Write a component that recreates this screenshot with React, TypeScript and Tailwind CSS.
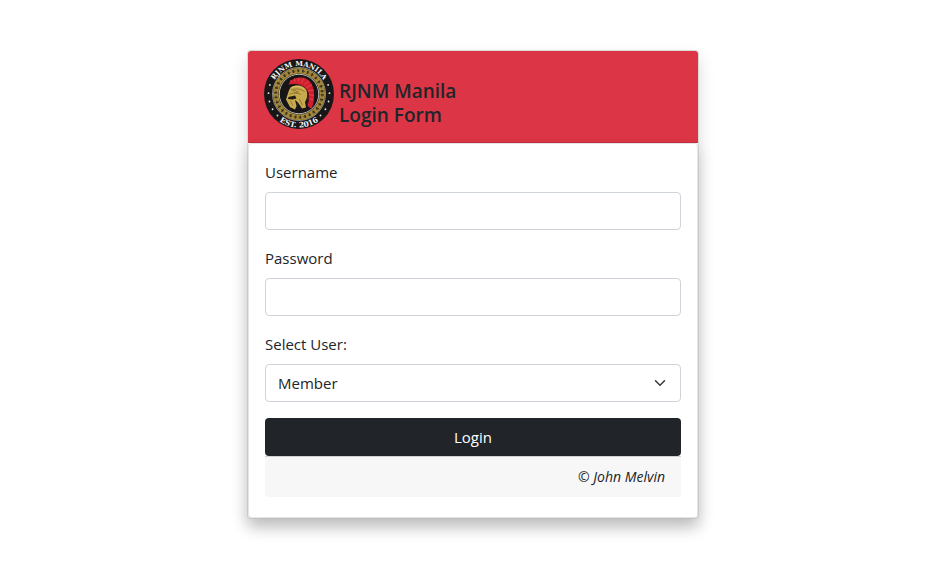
import React from "react";

function Dots({ from, to, count }: { from: number; to: number; count: number }) {
  return (
    <>
      {Array.from({ length: count }, (_, i) => {
        const a = ((from + ((to - from) * i) / (count - 1)) * Math.PI) / 180;
        return <circle key={i} cx={70 + 61 * Math.cos(a)} cy={70 + 61 * Math.sin(a)} r="1.8" fill="#e8e8e8" />;
      })}
    </>
  );
}

function Logo() {
  return (
    <svg className="size-[70px] shrink-0" viewBox="0 0 140 140" role="img" aria-label="RJNM Manila, est. 2016">
      <defs>
        <path id="arc-top" d="M14 70a56 56 0 0 1 112 0" />
        <path id="arc-bottom" d="M3 70a67 67 0 0 0 134 0" />
      </defs>
      <circle cx="70" cy="70" r="70" fill="#191617" />
      <circle cx="70" cy="70" r="53" fill="none" stroke="#b4b1ab" strokeWidth="1.5" />
      <circle cx="70" cy="70" r="46.5" fill="none" stroke="#a58a3c" strokeWidth="11" />
      <circle cx="70" cy="70" r="46.5" fill="none" stroke="#3a301a" strokeWidth="6" strokeDasharray="3.3 6.44" />
      <circle cx="70" cy="70" r="46.5" fill="none" stroke="#453a20" strokeWidth="1.5" strokeDasharray="6 3.74" />
      <circle cx="70" cy="70" r="39.5" fill="#171516" stroke="#bdb9b0" strokeWidth="2" />
      <Dots from={150} to={213} count={5} />
      <Dots from={-33} to={30} count={5} />
      <circle cx="27" cy="113" r="1.8" fill="#e8e8e8" />
      <circle cx="113" cy="113" r="1.8" fill="#e8e8e8" />
      <text fill="#f4f4f4" fontSize="14" fontWeight="700" fontFamily="'DejaVu Serif', serif" textAnchor="middle">
        <textPath href="#arc-top" startOffset="50%">RJNM MANILA</textPath>
      </text>
      <text fill="#f4f4f4" fontSize="15" fontWeight="700" fontFamily="'DejaVu Serif', serif" textAnchor="middle">
        <textPath href="#arc-bottom" startOffset="50%">EST. 2016</textPath>
      </text>
      {/* crest */}
      <path d="M49 51C52 41 64 36 76 37c15 2 23 14 24 31 1 12-1 23-5 31-4-1-7-4-8-8 4-10 4-21-1-29-8-11-22-14-37-11Z" fill="#d21f2f" />
      <path d="m55 46-2-4m9 3-1-6m8 6 1-7m5 10 4-9m2 13 8-8m-4 13 11-6m-8 13 12-2m-12 9 12 2m-13 5 11 4" stroke="#f0555b" strokeWidth="1.3" fill="none" />
      <path d="M86 63c5 9 4 19 1 27" stroke="#651017" strokeWidth="2" fill="none" />
      {/* helmet */}
      <path d="M53 57c11-7 27-4 32 6 3 9 1 17-3 23l2 11-8 2-8-12-6 14-10-5-8-15c3-9 5-18 9-24Z" fill="#c8aa4e" />
      <path d="m49 76 13-3 3 6-8 2-9-1Z" fill="#211b13" />
      <path d="m68 87-3 7-3-12Z" fill="#171516" />
      <path d="M54 62c9-4 20-2 27 3M51 70c8-3 16-2 23 1m-17-7c5-2 8-1 10 2m-7 1 10-1M53 84l5 9m13-13 6 13" stroke="#7a6126" strokeWidth="1.4" fill="none" />
      <path d="M56 57c9-4 18-3 24 3" stroke="#e1c66e" strokeWidth="2" fill="none" />
    </svg>
  );
}

function TextField({ id, label, type }: { id: string; label: string; type: string }) {
  return (
    <div className="mb-4">
      <label htmlFor={id} className="mb-2 block">{label}</label>
      <input id={id} type={type} className="block h-[38px] w-full rounded border border-[#ced4da] bg-white px-3" />
    </div>
  );
}

export default function App() {
  return (
    <main className="flex justify-center bg-white pt-[50px] pb-11 pl-4 font-['Open_Sans','Noto_Sans',sans-serif] text-[15px] leading-6 text-[#212529]">
      <section className="w-full max-w-[452px] rounded border border-black/15 bg-white shadow-[0_8px_16px_rgba(0,0,0,0.15)]">
        <header className="flex items-end gap-[5px] rounded-t-[3px] border-b border-[#c13040] bg-[#dc3545] px-4 pt-2 pb-[13px]">
          <Logo />
          <h1 className="pb-0.5 text-[19px] leading-6 font-semibold">
            RJNM Manila
            <br />
            Login Form
          </h1>
        </header>
        <form
          onSubmit={(e) => e.preventDefault()}
          className="rounded border border-black/10 bg-white px-4 pt-4 pb-5 shadow-[0_8px_16px_rgba(0,0,0,0.15)]"
        >
          <TextField id="username" label="Username" type="text" />
          <TextField id="password" label="Password" type="password" />
          <label htmlFor="role" className="mb-2 block">Select User:</label>
          <div className="relative mb-4">
            <select id="role" defaultValue="Member" className="block h-[38px] w-full appearance-none rounded border border-[#ced4da] bg-white px-3">
              <option>Member</option>
              <option>Admin</option>
            </select>
            <svg className="pointer-events-none absolute top-[13px] right-[15px] size-3" viewBox="0 0 16 16" fill="none" stroke="#343a40" strokeWidth="2" strokeLinecap="round" strokeLinejoin="round">
              <path d="m2 5 6 6 6-6" />
            </svg>
          </div>
          <button type="submit" className="block h-[38px] w-full rounded bg-[#212529] text-white">Login</button>
          <footer className="rounded-b-[3px] border-t border-black/15 bg-[#f7f7f7] px-4 py-2 text-right text-[14px] italic">
            © John Melvin
          </footer>
        </form>
      </section>
    </main>
  );
}
